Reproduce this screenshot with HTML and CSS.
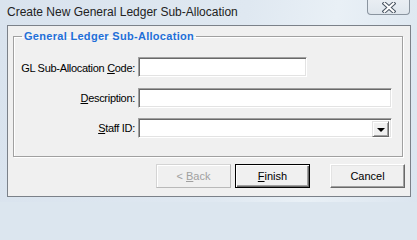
FILE: index.html
```html
<!DOCTYPE html>
<html>
<head>
<meta charset="utf-8">
<link rel="stylesheet" href="styles.css">
</head>
<body>
<div class="window">
  <div class="titlebar">
    <span class="title">Create New General Ledger Sub-Allocation</span>
    <div class="close">
      <svg width="14" height="11" viewBox="0 0 14 11">
        <path d="M2.5 1.5 L11.5 9.5 M11.5 1.5 L2.5 9.5" stroke="#4a5562" stroke-width="4" stroke-linecap="square" fill="none"/>
        <path d="M2.5 1.5 L11.5 9.5 M11.5 1.5 L2.5 9.5" stroke="#ffffff" stroke-width="2" stroke-linecap="square" fill="none"/>
      </svg>
    </div>
  </div>
  <div class="client">
    <fieldset class="group">
      <legend class="legend">General Ledger Sub-Allocation</legend>
      <div class="form">
        <label class="lbl">GL Sub-Allocation <u>C</u>ode:</label>
        <div class="field short"></div>
        <label class="lbl"><u>D</u>escription:</label>
        <div class="field"></div>
        <label class="lbl"><u>S</u>taff ID:</label>
        <div class="field combo">
          <div class="dropbtn"><span class="arrow"></span></div>
        </div>
      </div>
    </fieldset>
    <div class="buttons">
      <div class="btn disabled"><span>&lt; <u>B</u>ack</span></div>
      <div class="btn default"><span><u>F</u>inish</span></div>
      <div class="btn cancel"><span>Cancel</span></div>
    </div>
  </div>
</div>
</body>
</html>
```
FILE: styles.css
```css
html, body {
  margin: 0;
  padding: 0;
  overflow: hidden;
  background: #dce6ef;
}
body {
  width: 417px;
  height: 202px;
}
.window {
  width: 417px;
  height: 202px;
  box-sizing: border-box;
  padding: 0 6px 5px 7px;
  background: linear-gradient(100deg, #d9e3ee 0%, #dfe8f1 55%, #e9f0f6 75%, #dbe5ef 100%);
}
.titlebar {
  height: 25px;
  display: flex;
  align-items: flex-start;
}
.title {
  font-family: "Liberation Sans", Arial, sans-serif;
  font-size: 12px;
  color: #222;
  padding: 5px 0 0 0;
  line-height: 14px;
}
.close {
  margin-left: auto;
  margin-right: 1px;
  width: 43px;
  height: 15px;
  box-sizing: border-box;
  border: 1px solid #8a949f;
  border-top: none;
  border-radius: 0 0 4px 4px;
  background: linear-gradient(#e9eef3, #dfe6ed);
  display: flex;
  align-items: center;
  justify-content: center;
}
.close svg {
  display: block;
}
.client {
  height: 172px;
  box-sizing: border-box;
  border: 1px solid #7b8189;
  background: #f0f0f0;
  font-family: "Liberation Sans", Arial, sans-serif;
  font-size: 11px;
  padding-top: 1px;
}
.group {
  margin: 2px 7px 0 5px;
  padding: 14px 10px 18px 0;
  border: 1px solid #a0a0a0;
  box-shadow: 1px 1px 0 #ffffff, inset 1px 1px 0 #ffffff;
  min-width: 0;
}
.legend {
  margin-left: 8px;
  padding: 0 2px;
  font-weight: bold;
  color: #1f6fd8;
  font-size: 11px;
  letter-spacing: 0.3px;
  line-height: 14px;
}
.form {
  display: grid;
  grid-template-columns: 121px 254px;
  column-gap: 3px;
  row-gap: 10px;
  align-items: center;
}
.lbl {
  text-align: right;
  color: #000;
  white-space: nowrap;
  letter-spacing: -0.3px;
}
.field {
  height: 20px;
  box-sizing: border-box;
  background: #fff;
  border-top: 1px solid #a0a0a0;
  border-left: 1px solid #a0a0a0;
  border-right: 1px solid #ffffff;
  border-bottom: 1px solid #ffffff;
  box-shadow: inset 1px 1px 0 #696969, inset -1px -1px 0 #e3e3e3;
}
.field.short {
  width: 169px;
  margin-bottom: 1px;
}
.combo {
  display: flex;
  justify-content: flex-end;
  padding: 2px 2px 2px 0;
}
.dropbtn {
  width: 17px;
  height: 16px;
  box-sizing: border-box;
  background: #f0f0f0;
  border-top: 1px solid #e3e3e3;
  border-left: 1px solid #e3e3e3;
  border-right: 1px solid #696969;
  border-bottom: 1px solid #696969;
  box-shadow: inset 1px 1px 0 #ffffff, inset -1px -1px 0 #a0a0a0;
  display: flex;
  align-items: center;
  justify-content: center;
}
.arrow {
  width: 0;
  height: 0;
  border-left: 4px solid transparent;
  border-right: 4px solid transparent;
  border-top: 4px solid #000;
  margin-top: 1px;
}
.buttons {
  display: flex;
  justify-content: flex-end;
  gap: 4px;
  margin: 7px 5px 0 0;
}
.btn {
  width: 75px;
  height: 24px;
  box-sizing: border-box;
  display: flex;
  align-items: center;
  justify-content: center;
  background: #f0f0f0;
  color: #000;
  border-top: 1px solid #ffffff;
  border-left: 1px solid #ffffff;
  border-right: 1px solid #696969;
  border-bottom: 1px solid #696969;
  box-shadow: inset -1px -1px 0 #a0a0a0, inset 1px 1px 0 #e3e3e3;
}
.btn span {
  white-space: pre;
}
.btn.default {
  border: 1px solid #000;
  box-shadow: inset 1px 1px 0 #ffffff, inset -1px -1px 0 #696969, inset -2px -2px 0 #a0a0a0;
}
.btn.disabled {
  color: #a0a0a0;
  border-color: #d4d4d4 #b9b9b9 #b9b9b9 #d4d4d4;
  box-shadow: inset 1px 1px 0 #ffffff;
}
.btn.cancel {
  margin-left: 16px;
}
```
